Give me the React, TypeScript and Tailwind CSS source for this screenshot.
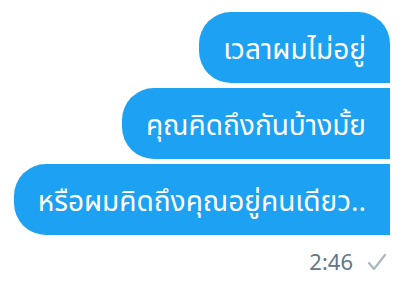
import React from "react";

export default function App() {
  const font = { fontFamily: '"Noto Sans", "Noto Sans Thai", "Liberation Sans", sans-serif' };
  return (
    <div className="w-[413px] h-[289px] bg-white" style={font}>
      <div className="flex flex-col items-end pr-[23px] pt-[12px] gap-[5px]">
        <div className="h-[71px] flex items-center bg-[#1da1f2] text-white text-[28px] px-[24px] rounded-tl-[32px] rounded-tr-[32px] rounded-bl-[32px]">
          เวลาผมไม่อยู่
        </div>
        <div className="h-[71px] flex items-center bg-[#1da1f2] text-white text-[28px] px-[24px] rounded-l-[32px]">
          คุณคิดถึงกันบ้างมั้ย
        </div>
        <div className="h-[71px] flex items-center bg-[#1da1f2] text-white text-[28px] px-[24px] rounded-l-[32px]">
          หรือผมคิดถึงคุณอยู่คนเดียว..
        </div>
        <div className="flex items-center mt-[5px] gap-[14px] pr-[3px]">
          <span className="text-[22px] text-[#657786]">2:46</span>
          <svg width="20" height="18" viewBox="0 0 20 18">
            <path d="M2 10 L7 16 L18 2" fill="none" stroke="#aab8c2" strokeWidth="2.2" strokeLinecap="round" strokeLinejoin="round" />
          </svg>
        </div>
      </div>
    </div>
  );
}
